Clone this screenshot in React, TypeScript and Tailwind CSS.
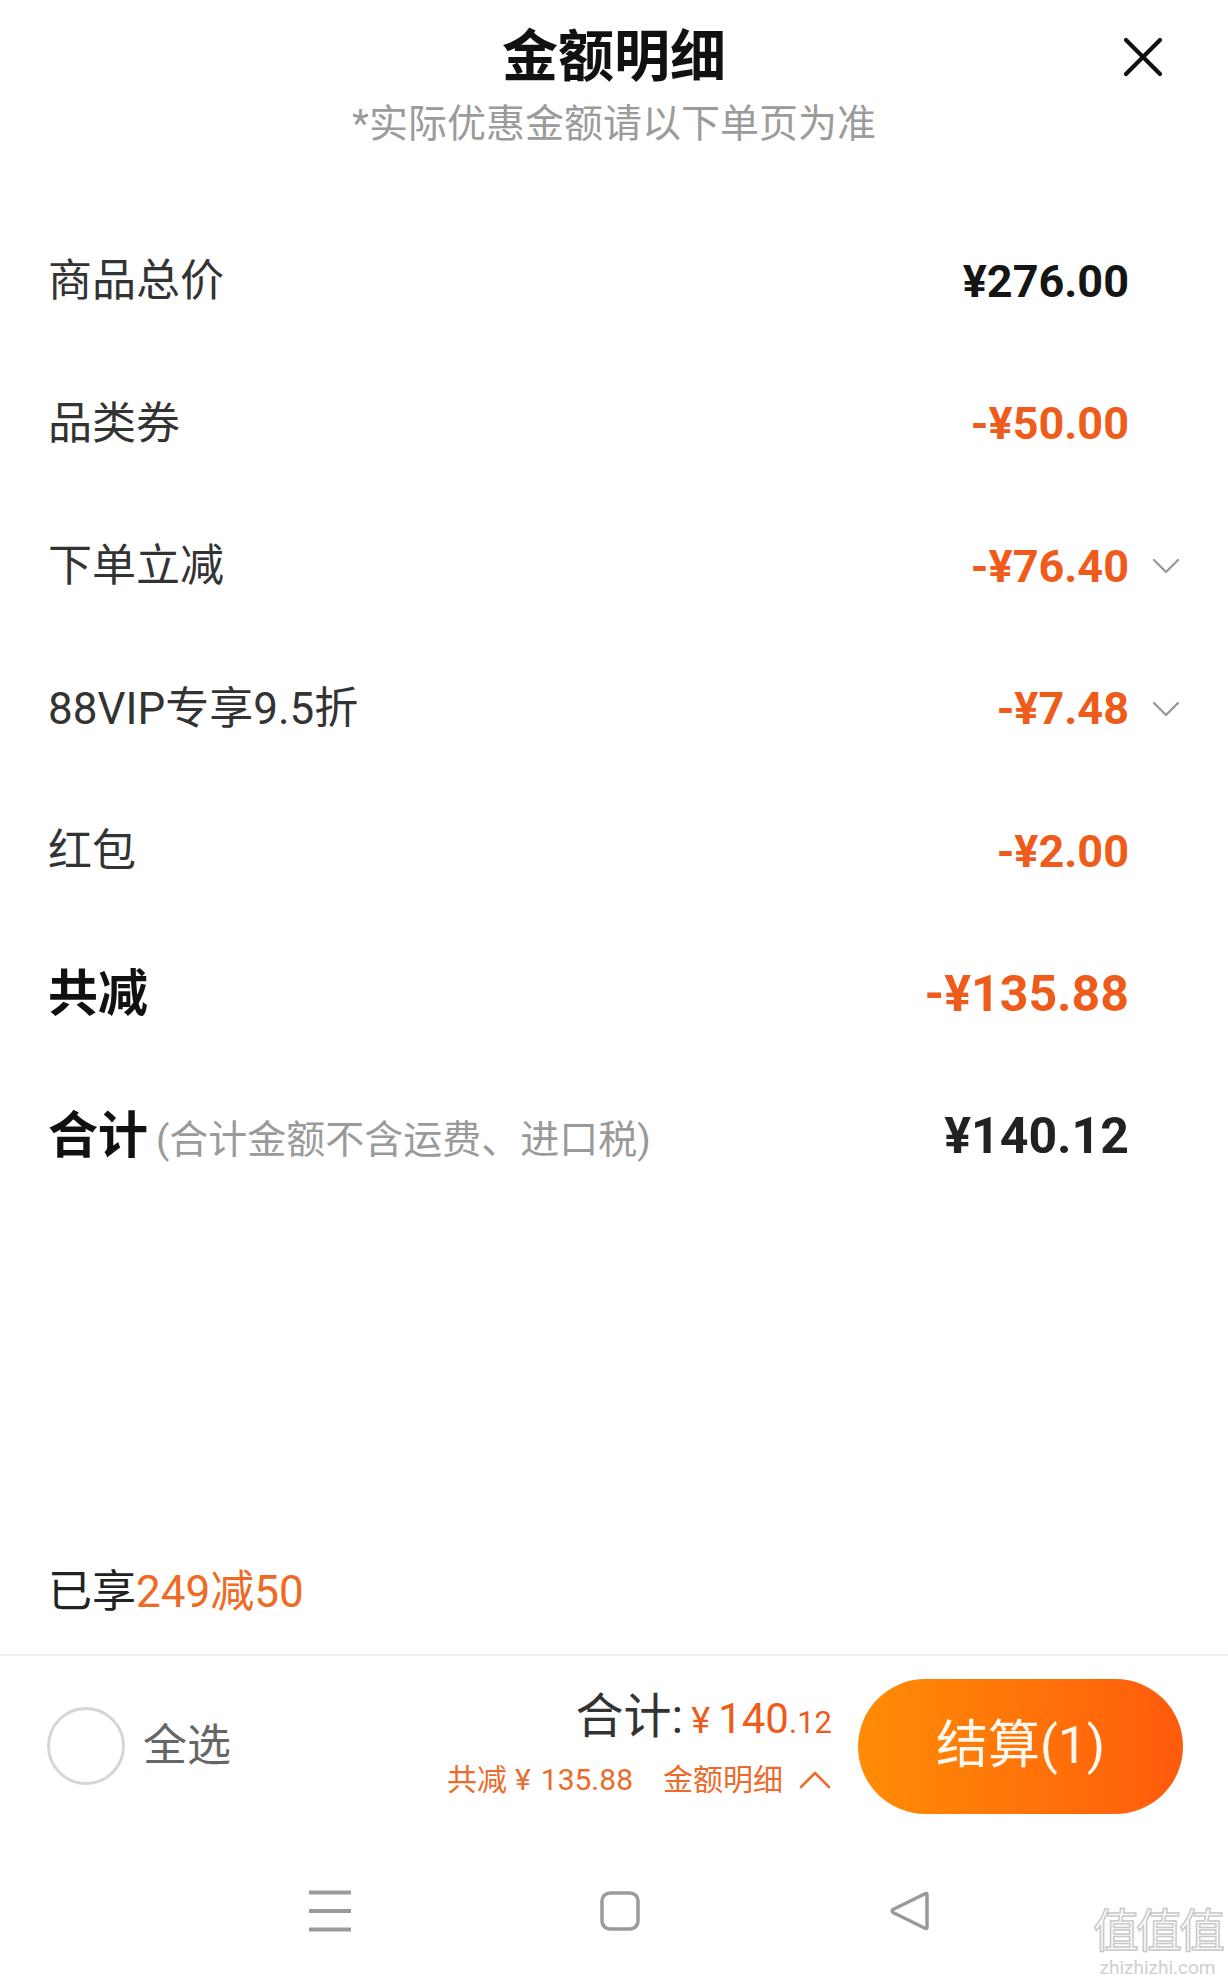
import React from "react";

type Row = {
  label: React.ReactNode;
  amount: string;
  amountClass: string;
  chevron?: boolean;
};

function ChevronDown() {
  return (
    <svg width="28" height="18" viewBox="0 0 28 18" fill="none">
      <polyline points="2,3 14,15 26,3" stroke="#9a9a9a" strokeWidth="2.4" strokeLinecap="round" strokeLinejoin="round" />
    </svg>
  );
}

export default function App() {
  const orange = "text-[#ee5b1b]";
  const rows: Row[] = [
    { label: <span className="text-[44px] text-[#333]">商品总价</span>, amount: "¥276.00", amountClass: "text-[45px] font-bold text-[#151515]" },
    { label: <span className="text-[44px] text-[#333]">品类券</span>, amount: "-¥50.00", amountClass: `text-[45px] font-bold ${orange}` },
    { label: <span className="text-[44px] text-[#333]">下单立减</span>, amount: "-¥76.40", amountClass: `text-[45px] font-bold ${orange}`, chevron: true },
    { label: <span className="text-[44px] text-[#333]">88VIP专享9.5折</span>, amount: "-¥7.48", amountClass: `text-[45px] font-bold ${orange}`, chevron: true },
    { label: <span className="text-[44px] text-[#333]">红包</span>, amount: "-¥2.00", amountClass: `text-[45px] font-bold ${orange}` },
    { label: <span className="text-[50px] font-bold text-[#111]">共减</span>, amount: "-¥135.88", amountClass: `text-[50px] font-bold ${orange}` },
    {
      label: (
        <span className="flex items-baseline">
          <span className="text-[50px] font-bold text-[#111]">合计</span>
          <span className="ml-[8px] text-[39px] text-[#9a9a9a]">(合计金额不含运费、进口税)</span>
        </span>
      ),
      amount: "¥140.12",
      amountClass: "text-[50px] font-bold text-[#222]",
    },
  ];

  return (
    <div className="relative flex h-[1986px] w-[1228px] flex-col overflow-hidden bg-white font-['Roboto','Noto_Sans_CJK_SC',sans-serif]">
      {/* Header */}
      <div className="h-[210px] shrink-0">
        <div className="mt-[29px] grid grid-cols-[1fr_auto_1fr] items-center">
          <div />
          <div className="text-[56px] font-bold leading-[56px] text-[#111]">金额明细</div>
          <div className="flex justify-end pr-[65px]">
            <svg width="40" height="40" viewBox="0 0 40 40" fill="none">
              <path d="M3 3 L37 37 M37 3 L3 37" stroke="#111" strokeWidth="4.2" strokeLinecap="round" />
            </svg>
          </div>
        </div>
        <div className="mt-[18px] text-center text-[39px] leading-[42px] text-[#9b9b9b]">*实际优惠金额请以下单页为准</div>
      </div>

      {/* Rows */}
      <div className="flex shrink-0 flex-col">
        {rows.map((r, i) => (
          <div key={i} className="flex h-[142.5px] items-center justify-between pl-[48px] pr-[48px]">
            <div className="leading-none">{r.label}</div>
            <div className="flex items-center">
              <span className={`leading-none ${r.amountClass}`}>{r.amount}</span>
              <span className="flex w-[51px] justify-end">{r.chevron ? <ChevronDown /> : null}</span>
            </div>
          </div>
        ))}
      </div>

      <div className="flex-1" />

      {/* Promo line */}
      <div className="flex h-[124px] shrink-0 items-center pl-[48px] text-[44px] leading-none">
        <span className="text-[#222]">已享</span>
        <span className="text-[#ef6a22]">249减50</span>
      </div>
      <div className="h-[2px] shrink-0 bg-[#eeeeee]" />

      {/* Bottom bar */}
      <div className="flex h-[180px] shrink-0 items-center pl-[47px] pr-[45px]">
        <div className="h-[78px] w-[78px] rounded-full border-[3px] border-[#d6d6d6]" />
        <span className="ml-[18px] text-[44px] leading-none text-[#666]">全选</span>
        <div className="flex-1" />
        <div className="mb-[4px] flex flex-col items-end">
          <div className="flex items-baseline leading-none">
            <span className="text-[48px] text-[#333]">合计:</span>
            <span className="ml-[8px] text-[36px] text-[#ee5b1b]">¥</span>
            <span className="ml-[8px] text-[42px] text-[#ee5b1b]">140</span>
            <span className="text-[31px] text-[#ee5b1b]">.12</span>
          </div>
          <div className="mt-[24px] flex items-center text-[30px] leading-none text-[#ec6a2a]">
            <span>共减</span>
            <span className="ml-[8px]">¥</span>
            <span className="ml-[10px]">135.88</span>
            <span className="ml-[30px]">金额明细</span>
            <svg className="ml-[15px]" width="34" height="20" viewBox="0 0 34 20" fill="none">
              <polyline points="3,17 17,3 31,17" stroke="#ec6a2a" strokeWidth="2.6" strokeLinecap="round" strokeLinejoin="round" />
            </svg>
          </div>
        </div>
        <div className="ml-[26px] flex h-[135px] w-[325px] items-center justify-center rounded-full bg-linear-to-r from-[#ff8c05] to-[#ff5a0c] text-[52px] leading-none text-[#fff8ee]">
          结算(1)
        </div>
      </div>

      {/* System nav bar */}
      <div className="flex h-[150px] shrink-0 items-center pl-[185px]">
        <div className="flex w-[290px] justify-center">
          <svg width="44" height="42" viewBox="0 0 44 42" fill="none">
            <path d="M1 2.5 H43 M1 21 H43 M1 39.5 H43" stroke="#9a9a9a" strokeWidth="4" />
          </svg>
        </div>
        <div className="flex w-[290px] justify-center">
          <svg width="40" height="40" viewBox="0 0 40 40" fill="none">
            <rect x="2" y="2" width="36" height="36" rx="8" stroke="#9a9a9a" strokeWidth="3.5" />
          </svg>
        </div>
        <div className="flex w-[290px] justify-center">
          <svg width="42" height="40" viewBox="0 0 42 40" fill="none">
            <path d="M38 3.5 C38 2.5 37 2 36 2.8 L4 18.5 C2.8 19.2 2.8 20.8 4 21.5 L36 37.2 C37 38 38 37.5 38 36.5 Z" stroke="#9a9a9a" strokeWidth="3.5" strokeLinejoin="round" />
          </svg>
        </div>
      </div>

      {/* Watermark */}
      <div className="pointer-events-none absolute bottom-[8px] right-[6px] flex flex-col items-center">
        <span className="text-[46px] leading-[50px] tracking-[-3px] text-white [-webkit-text-stroke:1.5px_#c9c9c9]">值值值</span>
        <span className="mt-[2px] text-[19px] leading-[20px] text-[#cfcfcf]">zhizhizhi.com</span>
      </div>
    </div>
  );
}
